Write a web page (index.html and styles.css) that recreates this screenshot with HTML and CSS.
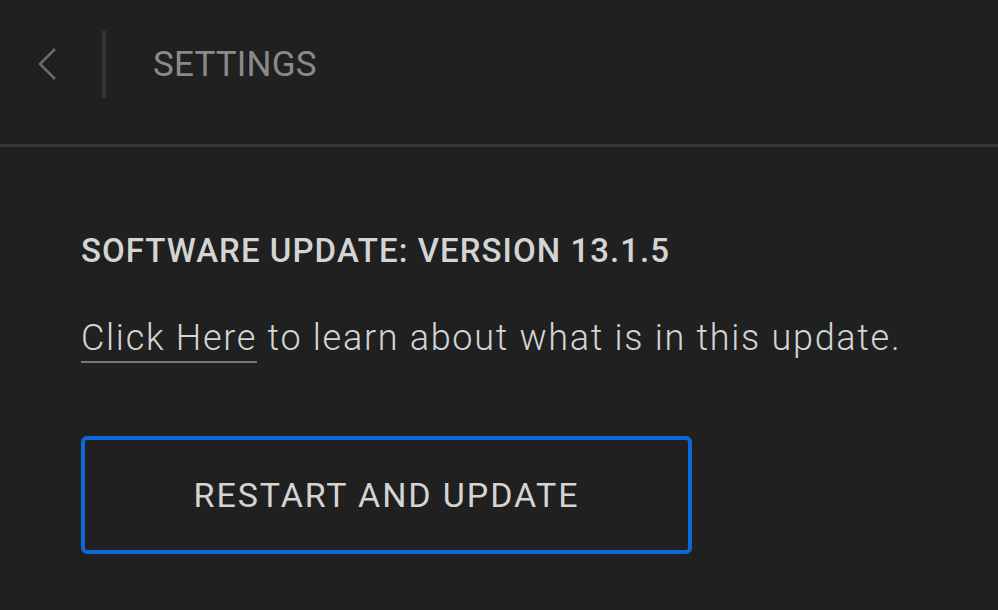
FILE: index.html
```html
<!DOCTYPE html>
<html lang="en">
<head>
    <meta charset="UTF-8">
    <meta name="viewport" content="width=device-width, initial-scale=1.0">
    <title>Settings</title>
    <link rel="stylesheet" href="styles.css">
</head>
<body>
    <div class="cabecera">
        <div class="volver">
            <svg width="22" height="34" viewBox="0 0 22 34">
                <polyline points="19,2 4,17 19,32" fill="none" stroke="#6b6b6b" stroke-width="2.5"/>
            </svg>
        </div>
        <div class="separador"></div>
        <div class="titulo">SETTINGS</div>
    </div>

    <div class="contenido">
        <h1 class="version">SOFTWARE UPDATE: VERSION 13.1.5</h1>
        <p class="texto"><a class="enlace" href="#">Click Here</a> to learn about what is in this update.</p>
        <button class="boton">RESTART AND UPDATE</button>
    </div>
</body>
</html>
```

FILE: styles.css
```css
body {
    margin: 0;
    background-color: #202020;
    font-family: Roboto, "Liberation Sans", sans-serif;
    height: 100vh;
    overflow: hidden;
}
.cabecera {
    display: flex;
    align-items: center;
    height: 147px;
    box-sizing: border-box;
    padding-bottom: 16px;
    border-bottom: 3px solid #353535;
}
.volver {
    width: 102px;
    box-sizing: border-box;
    padding-left: 36px;
    display: flex;
}
.separador {
    width: 4px;
    height: 67px;
    background-color: #363636;
}
.titulo {
    margin-left: 47px;
    font-size: 35px;
    color: #8a8a8a;
    letter-spacing: 0.2px;
}
.contenido {
    padding: 84px 81px 0 81px;
}
.version {
    margin: 0;
    font-size: 33px;
    font-weight: 500;
    color: #d4d4d4;
    letter-spacing: 1.05px;
}
.texto {
    margin: 47px 0 0 0;
    font-size: 36px;
    font-weight: 300;
    color: #d4d4d4;
    letter-spacing: 1.7px;
}
.enlace {
    color: #d4d4d4;
    text-decoration: none;
    border-bottom: 2px solid #777;
    padding-bottom: 2px;
}
.boton {
    display: block;
    margin-top: 77px;
    width: 611px;
    height: 118px;
    background-color: transparent;
    border: 4px solid #0b68d8;
    border-radius: 6px;
    font-family: Roboto, "Liberation Sans", sans-serif;
    font-size: 34px;
    color: #d4d4d4;
    letter-spacing: 1.9px;
}
```
